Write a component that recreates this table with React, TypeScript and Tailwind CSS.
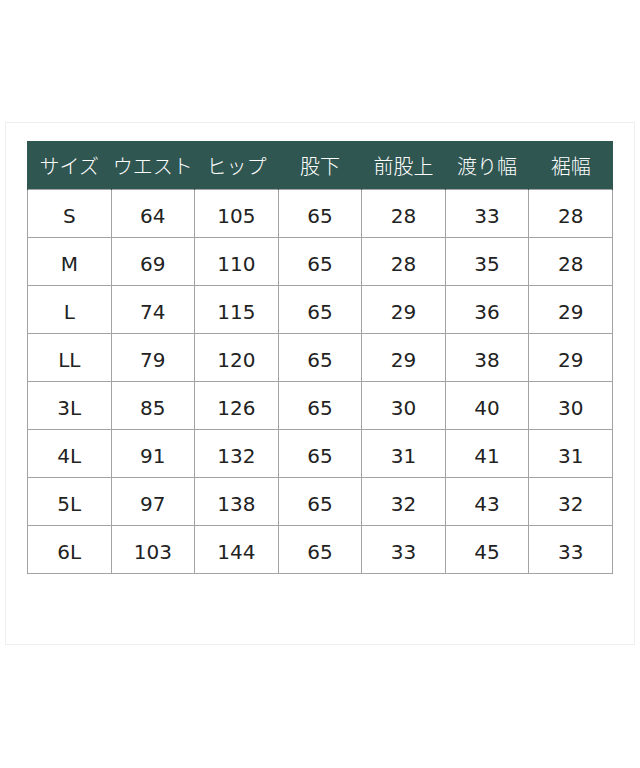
const headers = ["サイズ", "ウエスト", "ヒップ", "股下", "前股上", "渡り幅", "裾幅"];

const rows = [
  ["S", "64", "105", "65", "28", "33", "28"],
  ["M", "69", "110", "65", "28", "35", "28"],
  ["L", "74", "115", "65", "29", "36", "29"],
  ["LL", "79", "120", "65", "29", "38", "29"],
  ["3L", "85", "126", "65", "30", "40", "30"],
  ["4L", "91", "132", "65", "31", "41", "31"],
  ["5L", "97", "138", "65", "32", "43", "32"],
  ["6L", "103", "144", "65", "33", "45", "33"],
];

export default function App() {
  return (
    <div className="h-[768px] w-[640px] bg-white pt-[122px] pl-[5px] font-['DejaVu_Sans','Noto_Sans_CJK_JP',sans-serif]">
      <div className="h-[523px] w-[630px] border border-[#eeeeee] pt-[18px] pl-[21px]">
        <table className="w-[586px] table-fixed border-collapse">
          <thead>
            <tr className="h-[48px] bg-[#2f5651]">
              {headers.map((h) => (
                <th
                  key={h}
                  className="border-x border-[#2f5651] p-0 pt-[3px] text-center text-[20px] font-light text-white font-['Noto_Sans_CJK_JP',sans-serif]"
                >
                  {h}
                </th>
              ))}
            </tr>
          </thead>
          <tbody>
            {rows.map((row) => (
              <tr key={row[0]} className="h-[48px]">
                {row.map((cell, i) => (
                  <td
                    key={i}
                    className="border border-[#a3a3a3] p-0 pt-[5px] text-center text-[20px] text-[#222222]"
                  >
                    {cell}
                  </td>
                ))}
              </tr>
            ))}
          </tbody>
        </table>
      </div>
    </div>
  );
}
